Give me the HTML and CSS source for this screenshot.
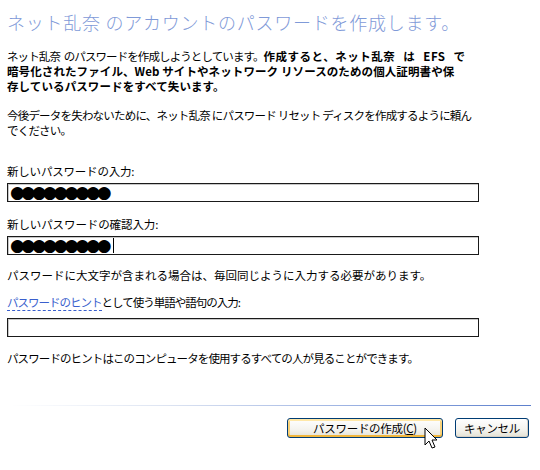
FILE: index.html
```html
<!DOCTYPE html>
<html lang="ja">
<head>
<meta charset="utf-8">
<link rel="stylesheet" href="styles.css">
</head>
<body>
<div class="page">
  <h1 class="title">ネット乱奈 のアカウントのパスワードを作成します。</h1>
  <p class="para p1"><span class="r1">ネット乱奈 のパスワードを作成しようとしています。</span><b><span class="b1">作成すると、ネット乱奈 は EFS で</span><br>暗号化されたファイル、Web サイトやネットワーク リソースのための個人証明書や保<br>存しているパスワードをすべて失います。</b></p>
  <p class="para p2">今後データを失わないために、ネット乱奈 にパスワード リセット ディスクを作成するように頼ん<br>でください。</p>
  <div class="label l1">新しいパスワードの入力:</div>
  <div class="field"><span class="dots">●●●●●●●●●</span></div>
  <div class="label l2">新しいパスワードの確認入力:</div>
  <div class="field"><span class="dots">●●●●●●●●●</span><span class="caret"></span></div>
  <div class="label l3">パスワードに大文字が含まれる場合は、毎回同じように入力する必要があります。</div>
  <div class="label l4"><span class="hint">パスワードのヒント</span>として使う単語や語句の入力:</div>
  <div class="field f3"></div>
  <div class="label l5">パスワードのヒントはこのコンピュータを使用するすべての人が見ることができます。</div>
  <div class="sep"></div>
  <div class="buttons">
    <div class="btn btn-default">パスワードの作成(<u>C</u>)</div>
    <div class="btn btn-cancel">キャンセル</div>
  </div>
</div>
<svg class="cursor" width="14" height="24" viewBox="0 0 14 24">
  <path d="M1 1 L1 18 L5 14 L8 21 L11 20 L8 13 L13 13 Z" fill="#fff" stroke="#000" stroke-width="1" stroke-linejoin="miter"/>
</svg>
</body>
</html>
```
FILE: styles.css
```css
html, body {
  margin: 0;
  padding: 0;
  background: #ffffff;
}
body {
  width: 540px;
  height: 470px;
  position: relative;
  overflow: hidden;
  font-family: "Noto Sans CJK JP", "DejaVu Sans", sans-serif;
  font-size: 11.5px;
  color: #000;
}
.page {
  padding: 10px 0 0 7px;
  display: flex;
  flex-direction: column;
}
.title {
  margin: 0;
  font-size: 18px;
  line-height: 24px;
  font-weight: 300;
  color: #7f9ad8;
  letter-spacing: 0.75px;
}
.para {
  margin: 0;
  line-height: 15px;
  letter-spacing: -0.6px;
  white-space: nowrap;
}
.para b {
  font-weight: 700;
  letter-spacing: 0.1px;
}
.r1 { letter-spacing: -0.9px; word-spacing: 2px; }
.b1 { letter-spacing: 0.5px; word-spacing: 5px; }
.p1 { margin-top: 15px; }
.p2 { margin-top: 14px; letter-spacing: -0.8px; }
.label {
  line-height: 15px;
  letter-spacing: -0.6px;
  white-space: nowrap;
}
.l1 { margin-top: 26px; letter-spacing: -0.2px; }
.l2 { margin-top: 15px; letter-spacing: -0.1px; }
.l3 { margin-top: 13px; letter-spacing: 0; }
.l4 { margin-top: 12px; letter-spacing: -1px; }
.l5 { margin-top: 14px; letter-spacing: -0.9px; }
.field {
  width: 472px;
  height: 19px;
  box-sizing: border-box;
  border: 1px solid #1a1a1a;
  box-shadow: inset 1px 1px 0 #c8c8c8;
  margin-top: 4px;
  display: flex;
  align-items: center;
  padding-left: 2px;
  overflow: hidden;
}
.f3 { margin-top: 8px; }
.dots {
  font-family: "DejaVu Sans", sans-serif;
  font-size: 17px;
  line-height: 17px;
  letter-spacing: -4px;
}
.caret {
  display: inline-block;
  width: 1px;
  height: 15px;
  background: #000;
  margin-left: 5px;
}
.hint {
  color: #3a5fcd;
  border-bottom: 1px dashed #3a5fcd;
}
.sep {
  margin-top: 39px;
  margin-left: 3px;
  width: 521px;
  height: 1px;
  background: linear-gradient(to right, #ffffff 0%, #dde4f2 30%, #93abe0 70%, #5c7fcc 100%);
}
.buttons {
  margin-top: 12px;
  display: flex;
  justify-content: flex-end;
  gap: 12px;
  padding-right: 11px;
}
.btn {
  height: 20px;
  box-sizing: border-box;
  border: 1px solid #003c74;
  border-radius: 3px;
  background: linear-gradient(to bottom, #ffffff 0%, #f4f3ee 60%, #e3e1d4 100%);
  font-size: 11.5px;
  line-height: 18px;
  text-align: center;
  letter-spacing: -0.3px;
}
.btn-default {
  width: 156px;
  box-shadow: inset 0 2px 0 #ffe8a8, inset 0 -2px 0 #f0b63c, inset 2px 0 0 #f9d27a, inset -2px 0 0 #f9d27a;
}
.btn-cancel {
  width: 74px;
  box-shadow: inset 0 -1px 0 #d6d0c5, inset -1px 0 0 #d6d0c5;
}
.btn u {
  text-decoration: underline;
}
.cursor {
  position: absolute;
  left: 424px;
  top: 427px;
}
```
